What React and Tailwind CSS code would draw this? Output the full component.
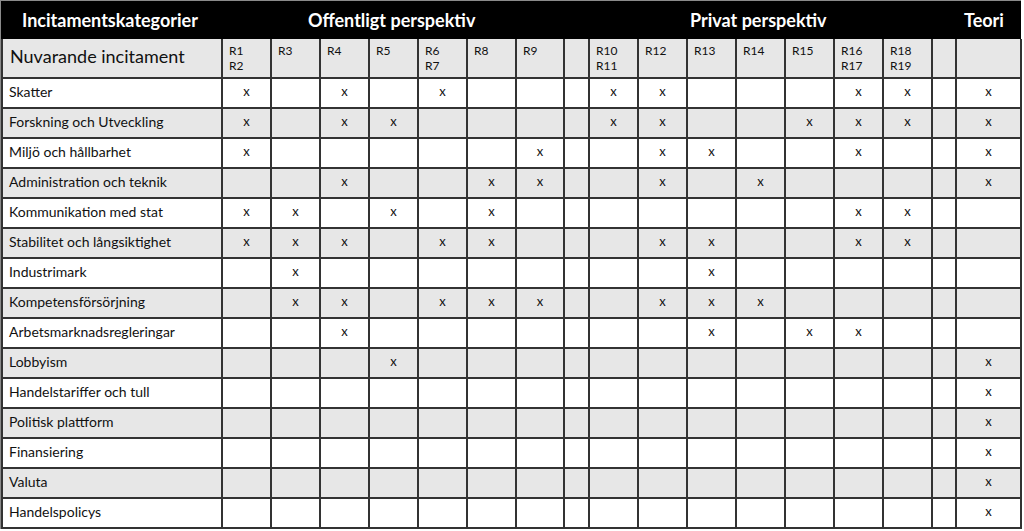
import React from 'react'

const cols = [
  ['R1', 'R2'],
  ['R3'],
  ['R4'],
  ['R5'],
  ['R6', 'R7'],
  ['R8'],
  ['R9'],
  [],
  ['R10', 'R11'],
  ['R12'],
  ['R13'],
  ['R14'],
  ['R15'],
  ['R16', 'R17'],
  ['R18', 'R19'],
  [],
  [],
]

const widths = [220, 49, 49, 49, 49, 49, 49, 48, 25, 49, 49, 49, 49, 49, 49, 49, 24, 65]

// column numbers (1-based, after the label column) that hold an x
const rows = [
  ['Skatter', [1, 3, 5, 9, 10, 14, 15, 17]],
  ['Forskning och Utveckling', [1, 3, 4, 9, 10, 13, 14, 15, 17]],
  ['Miljö och hållbarhet', [1, 7, 10, 11, 14, 17]],
  ['Administration och teknik', [3, 6, 7, 10, 12, 17]],
  ['Kommunikation med stat', [1, 2, 4, 6, 14, 15]],
  ['Stabilitet och långsiktighet', [1, 2, 3, 5, 6, 10, 11, 14, 15]],
  ['Industrimark', [2, 11]],
  ['Kompetensförsörjning', [2, 3, 5, 6, 7, 10, 11, 12]],
  ['Arbetsmarknadsregleringar', [3, 11, 13, 14]],
  ['Lobbyism', [4, 17]],
  ['Handelstariffer och tull', [17]],
  ['Politisk plattform', [17]],
  ['Finansiering', [17]],
  ['Valuta', [17]],
  ['Handelspolicys', [17]],
]

const App = () => {
  return (
    <div className="w-[1024px] h-[531px] bg-white overflow-hidden text-[#111]" style={{ fontFamily: 'Lato, "Open Sans", sans-serif' }}>
      <div className="w-[1021px] border-l border-t border-[#8a8a8a]">
        <div className="flex items-center h-[38px] bg-black text-white font-bold text-[18px]">
          <span className="w-[307px] pl-[21px]">Incitamentskategorier</span>
          <span className="w-[382px]">Offentligt perspektiv</span>
          <span className="w-[274px]">Privat perspektiv</span>
          <span>Teori</span>
        </div>
        <table className="table-fixed border-collapse w-[1020px]">
          <colgroup>
            {widths.map((w, i) => (
              <col key={i} style={{ width: w }} />
            ))}
          </colgroup>
          <tbody>
            <tr className="h-[39px] bg-[#e7e7e7]">
              <td className="border-2 border-[#333] border-t-0 pl-[7px] pb-[4px] text-[18px] align-middle">Nuvarande incitament</td>
              {cols.map((c, i) => (
                <td key={i} className="border-2 border-[#333] border-t-0 align-top pl-[6px] pt-[4px] text-[12px] leading-[15px]">
                  {c.map((l) => (
                    <div key={l}>{l}</div>
                  ))}
                </td>
              ))}
            </tr>
            {rows.map(([label, xs], r) => (
              <tr key={label} className={r % 2 === 0 ? 'h-[30px] bg-white' : 'h-[30px] bg-[#e7e7e7]'}>
                <td className="border-2 border-[#333] pl-[6px] pb-[3px] text-[14px]">{label}</td>
                {cols.map((c, i) => (
                  <td key={i} className="border-2 border-[#333] pb-[2px] text-center text-[13px]">
                    {xs.includes(i + 1) ? 'x' : ''}
                  </td>
                ))}
              </tr>
            ))}
          </tbody>
        </table>
      </div>
    </div>
  )
}

export default App
